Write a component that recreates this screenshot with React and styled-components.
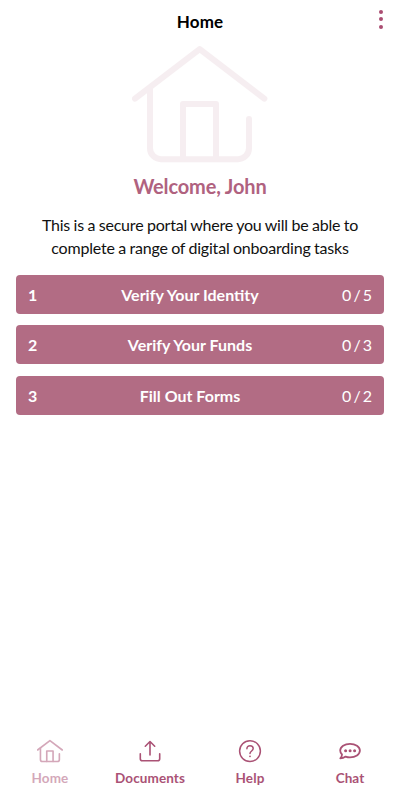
import React from "react";
import styled, { createGlobalStyle } from "styled-components";

const GlobalStyle = createGlobalStyle`
  * {
    box-sizing: border-box;
  }
  body {
    margin: 0;
    background: #fff;
    font-family: "Lato", "Liberation Sans", sans-serif;
  }
`;

const Wrapper = styled.div`
  display: flex;
  flex-direction: column;
  width: 100%;
  height: 100vh;
  background: #fff;
`;

const Header = styled.header`
  display: grid;
  grid-template-columns: 40px 1fr 40px;
  align-items: center;
  height: 44px;
`;

const PageTitle = styled.h1`
  grid-column: 2;
  margin: 0;
  color: #000;
  font-size: 17px;
  line-height: 20px;
  font-weight: 700;
  letter-spacing: 0.2px;
  text-align: center;
`;

const MenuButton = styled.button`
  display: flex;
  flex-direction: column;
  align-items: center;
  gap: 3.5px;
  padding: 0 0 6px 1px;
  border: none;
  background: transparent;
  cursor: pointer;
`;

const Dot = styled.span`
  width: 4px;
  height: 4px;
  border-radius: 50%;
  background: #aa4d72;
`;

const Main = styled.main`
  flex: 1;
  display: flex;
  flex-direction: column;
  align-items: center;
  padding: 1px 16px 0;
`;

const Hero = styled.div`
  height: 118px;
  opacity: 0.11;
  color: #b26c84;
`;

const Welcome = styled.h2`
  margin: 11px 0 0;
  color: #b0627f;
  font-size: 20px;
  line-height: 24px;
  font-weight: 700;
  letter-spacing: -0.15px;
`;

const Intro = styled.p`
  margin: 15px 0 15.8px;
  max-width: 330px;
  color: #111;
  font-size: 16px;
  line-height: 23px;
  letter-spacing: -0.2px;
  word-spacing: -0.4px;
  text-align: center;
`;

const TaskList = styled.div`
  display: flex;
  flex-direction: column;
  gap: 11.5px;
  width: 100%;
`;

const Task = styled.button`
  display: grid;
  grid-template-columns: 40px 1fr 60px;
  align-items: center;
  height: 39px;
  padding: 0 12px;
  border: none;
  border-radius: 4px;
  background: #b26c84;
  color: #fff;
  font-family: inherit;
  font-size: 16px;
  font-weight: 700;
  cursor: pointer;
`;

const Number = styled.span`
  text-align: left;
`;

const Progress = styled.span`
  font-weight: 400;
  word-spacing: -2px;
  text-align: right;
`;

const TabBar = styled.nav`
  display: grid;
  grid-template-columns: repeat(4, 1fr);
  height: 64px;
`;

const Tab = styled.button`
  display: flex;
  flex-direction: column;
  align-items: center;
  gap: 5px;
  padding: 2px 0 0;
  border: none;
  background: transparent;
  color: #aa5275;
  opacity: ${(props) => (props.$active ? 0.5 : 1)};
  font-family: inherit;
  font-size: 13.5px;
  line-height: 18px;
  font-weight: 700;
  letter-spacing: 0.1px;
  cursor: pointer;
`;

const Svg = styled.svg`
  display: block;
  fill: none;
  stroke: currentColor;
  stroke-linecap: round;
  stroke-linejoin: round;
`;

const HouseIcon = ({ width, height, strokeWidth }) => (
  <Svg
    width={width}
    height={height}
    viewBox="0 0 136 118"
    strokeWidth={strokeWidth}
  >
    <path d="M3 53.7 67.7 4.2 132.3 53.7" />
    <path d="M18 44V103.2a11 11 0 0 0 11 11H106a11 11 0 0 0 11-11V74" />
    <path d="M51 114V59H84V114" />
  </Svg>
);

const UploadIcon = () => (
  <Svg width="26" height="26" viewBox="0 0 26 26" strokeWidth="1.6">
    <path d="M13 17V3.5M8.3 8.2 13 3.5l4.7 4.7" />
    <path d="M3.3 15.8v5a2 2 0 0 0 2 2h15.4a2 2 0 0 0 2-2v-5" />
  </Svg>
);

const HelpIcon = () => (
  <Svg width="26" height="26" viewBox="0 0 26 26" strokeWidth="1.5">
    <circle cx="13" cy="13.1" r="10.4" />
    <path d="M9.9 10.8c0-1.9 1.3-3.1 3.1-3.1s3.2 1.2 3.2 2.9c0 2.4-3.2 2.4-3.2 5" />
    <circle cx="13" cy="18.3" r="0.9" fill="currentColor" stroke="none" />
  </Svg>
);

const ChatIcon = () => (
  <Svg width="26" height="26" viewBox="0 0 26 26" strokeWidth="1.8">
    <path d="M5 16.5C3.8 15.4 3.2 14 3.2 12.6 3.2 8.8 7.6 5.8 13 5.8s9.9 3 9.9 6.8-4.5 6.8-9.9 6.8c-1.6 0-3.1-.3-4.4-.8-1.5 1.1-3.3 1.7-5.3 1.7 1.1-1.1 1.7-2.4 1.7-3.8z" />
    <g fill="currentColor" stroke="none">
      <circle cx="8.6" cy="12.7" r="1.5" />
      <circle cx="13.1" cy="12.7" r="1.5" />
      <circle cx="17.6" cy="12.7" r="1.5" />
    </g>
  </Svg>
);

const tasks = [
  { title: "Verify Your Identity", done: 0, total: 5 },
  { title: "Verify Your Funds", done: 0, total: 3 },
  { title: "Fill Out Forms", done: 0, total: 2 },
];

const tabs = [
  {
    label: "Home",
    icon: <HouseIcon width="26" height="26" strokeWidth="8.5" />,
    active: true,
  },
  { label: "Documents", icon: <UploadIcon /> },
  { label: "Help", icon: <HelpIcon /> },
  { label: "Chat", icon: <ChatIcon /> },
];

const App = () => {
  return (
    <Wrapper>
      <GlobalStyle />
      <Header>
        <PageTitle>Home</PageTitle>
        <MenuButton aria-label="Menu">
          <Dot />
          <Dot />
          <Dot />
        </MenuButton>
      </Header>

      <Main>
        <Hero>
          <HouseIcon width="136" height="118" strokeWidth="6" />
        </Hero>
        <Welcome>Welcome, John</Welcome>
        <Intro>
          This is a secure portal where you will be able to complete a range of
          digital onboarding tasks
        </Intro>
        <TaskList>
          {tasks.map((task, index) => (
            <Task key={task.title}>
              <Number>{index + 1}</Number>
              <span>{task.title}</span>
              <Progress>
                {task.done} / {task.total}
              </Progress>
            </Task>
          ))}
        </TaskList>
      </Main>

      <TabBar>
        {tabs.map((tab) => (
          <Tab key={tab.label} $active={tab.active}>
            {tab.icon}
            {tab.label}
          </Tab>
        ))}
      </TabBar>
    </Wrapper>
  );
};

export default App;
